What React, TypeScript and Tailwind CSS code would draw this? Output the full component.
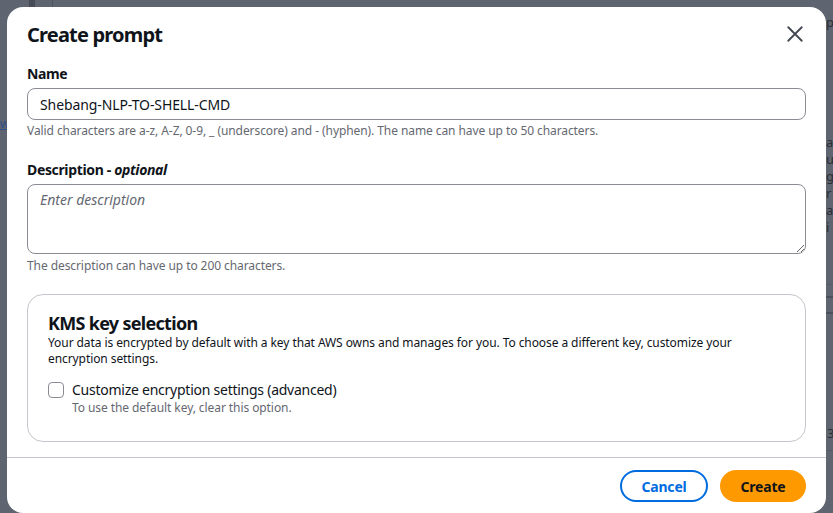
import React from 'react';

const font = { fontFamily: '"Noto Sans", "Open Sans", Arial, sans-serif' };

function CloseIcon() {
  return (
    <svg width="18" height="18" viewBox="0 0 16 16" fill="none" stroke="#424650" strokeWidth="1.6" strokeLinecap="round">
      <path d="M2 2l12 12M14 2L2 14" />
    </svg>
  );
}

export default function App() {
  return (
    <div className="relative w-[833px] h-[513px] overflow-hidden bg-[#5f6570]" style={font}>
      {/* page behind the overlay */}
      <div className="absolute left-[29px] top-0 w-[6px] h-[8px] bg-[#474c57]" />
      <div className="absolute left-[52px] top-0 w-px h-[8px] bg-[#4d525d]" />
      <div className="absolute left-0 top-[116px] w-[7px] overflow-hidden text-[12px] leading-4 text-[#2d4f8a] underline">w</div>
      <div className="absolute left-[826px] top-[14px] w-[7px] overflow-hidden flex flex-col text-[13px] leading-[17px] text-[#2a2e35]">
        <span>p</span>
      </div>
      <div className="absolute left-[826px] top-[134px] w-[7px] overflow-hidden flex flex-col text-[13px] leading-[17px] text-[#2a2e35]">
        <span>a</span>
        <span>u</span>
        <span>g</span>
        <span>r</span>
        <span>a</span>
        <span>i</span>
      </div>
      <div className="absolute left-[826px] top-[284px] w-[10px] h-px bg-[#545a66]" />
      <div className="absolute left-[826px] top-[296px] w-[10px] h-[2px] bg-[#4a505b]" />
      <div className="absolute left-[826px] top-[312px] w-[10px] h-[2px] bg-[#4a505b]" />
      <div className="absolute left-[827px] top-[423px] w-[6px] overflow-hidden text-[13px] leading-5 text-[#2a2e35]">3</div>
      <div className="absolute left-[826px] top-[450px] w-[10px] h-px bg-[#545a66]" />

      {/* modal */}
      <div className="absolute left-[7px] top-[7px] w-[819px] h-[506px] bg-white rounded-2xl flex flex-col text-[#0f141a]">
        <div className="flex items-start justify-between pl-5 pr-[22px] pt-4">
          <h1 className="text-[20px] leading-6 font-bold tracking-[-0.8px]">Create prompt</h1>
          <button className="mt-[2px]">
            <CloseIcon />
          </button>
        </div>

        <div className="px-5 flex flex-col">
          <label className="mt-[17px] text-[14px] leading-5 font-bold tracking-[-0.35px]">Name</label>
          <div className="mt-1 h-8 rounded-lg border border-[#8c8c94] px-3 flex items-center text-[14px] tracking-[-0.1px]">
            Shebang-NLP-TO-SHELL-CMD
          </div>
          <p className="mt-[3px] text-[12px] leading-4 text-[#656871] tracking-[-0.08px]">
            Valid characters are a-z, A-Z, 0-9, _ (underscore) and - (hyphen). The name can have up to 50 characters.
          </p>

          <label className="mt-[21px] text-[14px] leading-5 font-bold tracking-[-0.35px]">
            Description - <span className="italic">optional</span>
          </label>
          <textarea
            className="mt-1 h-[70px] rounded-lg border border-[#8c8c94] px-3 py-[5px] text-[14px] leading-5 placeholder:italic placeholder:text-[#656871] outline-none resize-y"
            placeholder="Enter description"
          />
          <p className="mt-1 text-[12px] leading-4 text-[#656871] tracking-[-0.08px]">The description can have up to 200 characters.</p>

          <div className="mt-5 h-[148px] rounded-2xl border border-[#c6c6cd] px-5 pt-[17px]">
            <h2 className="text-[18px] leading-[22px] font-bold tracking-[-0.7px]">KMS key selection</h2>
            <p className="mt-px text-[12px] leading-4 text-[#0f141a] max-w-[690px] tracking-[-0.08px]">
              Your data is encrypted by default with a key that AWS owns and manages for you. To choose a different key, customize your encryption settings.
            </p>
            <div className="mt-[13px] flex items-start gap-2">
              <div className="mt-[2px] w-4 h-4 rounded border border-[#8c8c94] shrink-0" />
              <div className="flex flex-col">
                <span className="text-[14px] leading-5 tracking-[-0.25px]">Customize encryption settings (advanced)</span>
                <span className="text-[12px] leading-4 text-[#656871] tracking-[-0.08px]">To use the default key, clear this option.</span>
              </div>
            </div>
          </div>
        </div>

        <div className="mt-[15px] border-t border-[#c6c6cd]" />

        <div className="flex justify-end gap-3 px-5 pt-3">
          <button className="h-8 w-[88px] rounded-full border-2 border-[#006ce0] text-[#006ce0] text-[14px] font-bold tracking-[-0.2px]">Cancel</button>
          <button className="h-8 w-[86px] rounded-full bg-[#ff9900] text-[#0f141a] text-[14px] font-bold tracking-[-0.2px]">Create</button>
        </div>
      </div>
    </div>
  );
}
